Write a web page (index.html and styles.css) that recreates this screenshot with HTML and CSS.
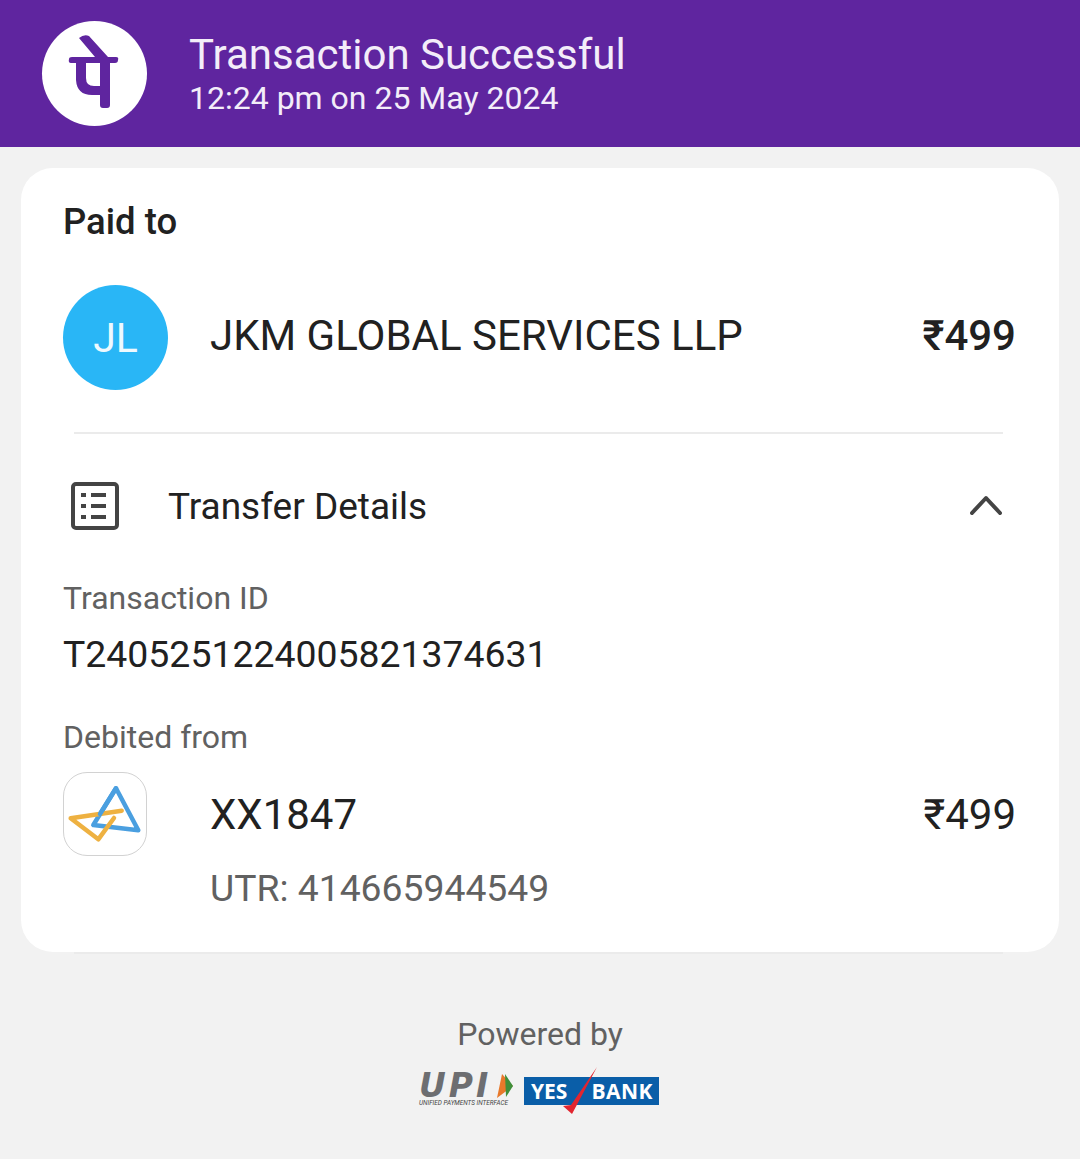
FILE: index.html
```html
<!DOCTYPE html>
<html lang="en">
<head>
    <meta charset="UTF-8">
    <meta name="viewport" content="width=device-width, initial-scale=1.0">
    <title>Transaction Successful</title>
    <link rel="stylesheet" href="styles.css">
</head>
<body>

<header class="top-bar">
    <div class="brand-circle">
        <svg width="105" height="105" viewBox="42 21 105 105">
            <path d="M79 38 Q84 34 89 36 L108 57 L116 57 Q119 57 118 60 Q118 63 115 63 L110 63 L110 105 Q110 108 107 108 L103 108 Q100 108 100 105 L100 95 L92 95 Q77 95 76 80 L76 63 L71 63 Q68 63 69 59 Q69 57 72 57 L95 57 Z M86 63 L86 78 Q86 86 94 86 L100 86 L100 63 Z" fill="#5f259f" fill-rule="evenodd"/>
        </svg>
    </div>
    <div class="top-text">
        <div class="top-title">Transaction Successful</div>
        <div class="top-time">12:24 pm on 25 May 2024</div>
    </div>
</header>

<main class="card">
    <h2 class="paid-label">Paid to</h2>

    <div class="payee-row">
        <div class="avatar">JL</div>
        <div class="payee-name">JKM GLOBAL SERVICES LLP</div>
        <div class="payee-amount">₹499</div>
    </div>

    <hr class="divider">

    <div class="details-row">
        <svg class="details-icon" width="48" height="48" viewBox="0 0 48 48">
            <rect x="2" y="2" width="44" height="44" rx="3" fill="none" stroke="#444" stroke-width="4"/>
            <path d="M10 13h5M10 24h5M10 35h5M20 13h15M20 24h15M20 35h15" stroke="#444" stroke-width="4" fill="none"/>
        </svg>
        <div class="details-title">Transfer Details</div>
        <svg class="chevron" width="32" height="20" viewBox="0 0 32 20">
            <path d="M2 18 L16 3 L30 18" fill="none" stroke="#444" stroke-width="4" stroke-linecap="round" stroke-linejoin="round"/>
        </svg>
    </div>

    <div class="field-label">Transaction ID</div>
    <div class="field-value">T2405251224005821374631</div>

    <div class="field-label debited-label">Debited from</div>
    <div class="bank-row">
        <div class="bank-icon">
            <svg width="84" height="84" viewBox="63 772 84 84">
                <path d="M116 788.3 L93.3 825 L138.3 830.3 Z" fill="none" stroke="#4a9fe0" stroke-width="4.5" stroke-linejoin="round"/>
                <path d="M121.7 810.7 L70.7 818.3 L98.3 839.3 L114 818" fill="none" stroke="#eeb141" stroke-width="4.5" stroke-linejoin="round" stroke-linecap="round"/>
                <path d="M116 788.3 L100 814" fill="none" stroke="#4a9fe0" stroke-width="4.5" stroke-linecap="round"/>
            </svg>
        </div>
        <div class="bank-info">
            <div class="bank-top">
                <div class="bank-account">XX1847</div>
                <div class="bank-amount">₹499</div>
            </div>
            <div class="bank-utr">UTR: 414665944549</div>
        </div>
    </div>
</main>

<hr class="divider card-end">

<footer class="powered">
    <div class="powered-text">Powered by</div>
    <div class="powered-logos">
        <div class="upi-logo">
            <div class="upi-mark">
                <span class="upi-letters">UPI</span>
                <svg width="20" height="26" viewBox="0 0 20 26">
                    <path d="M8 1 L19 13 L3 25 Z" fill="#e8792b"/>
                    <path d="M11 1 L19 13 L12 24 Z" fill="#3f8f3a"/>
                </svg>
            </div>
            <div class="upi-caption">UNIFIED PAYMENTS INTERFACE</div>
        </div>
        <div class="yes-logo">
            <span>YES</span>
            <span class="yes-bank">BANK</span>
            <svg class="yes-tick" width="38" height="50" viewBox="0 0 38 50">
                <path d="M34 0 L9 47 L0 39 L8 38 Z" fill="#e2252f"/>
            </svg>
        </div>
    </div>
</footer>

</body>
</html>
```
FILE: styles.css
```css
* {
    box-sizing: border-box;
}

body {
    margin: 0;
    height: 1159px;
    overflow: hidden;
    background-color: #f2f2f2;
    font-family: Roboto, "Noto Sans", sans-serif;
    color: #212121;
}

.top-bar {
    height: 147px;
    background-color: #5f259f;
    display: flex;
    align-items: center;
    padding-left: 42px;
    gap: 42px;
}

.brand-circle {
    width: 105px;
    height: 105px;
    border-radius: 50%;
    background-color: #fff;
    flex-shrink: 0;
}

.brand-circle svg {
    display: block;
}

.top-text {
    color: #f3edf9;
}

.top-title {
    font-size: 42px;
    line-height: 49px;
}

.top-time {
    font-size: 32px;
    line-height: 38px;
}

.card {
    margin: 21px 21px 0;
    height: 784px;
    background-color: #fff;
    border-radius: 32px;
    padding: 31px 43px 0 42px;
}

.paid-label {
    margin: 0;
    font-size: 36.5px;
    line-height: 46px;
    font-weight: 500;
}

.payee-row {
    display: flex;
    align-items: center;
    margin-top: 40px;
}

.avatar {
    width: 105px;
    height: 105px;
    border-radius: 50%;
    background-color: #29b6f6;
    color: #eef9fe;
    font-size: 41px;
    display: flex;
    align-items: center;
    justify-content: center;
    flex-shrink: 0;
}

.payee-name {
    margin-left: 42px;
    margin-bottom: 4px;
    flex: 1;
    font-size: 42px;
}

.payee-amount {
    margin-bottom: 4px;
    font-size: 42px;
    font-weight: 500;
}

.divider {
    border: none;
    height: 2px;
    background-color: #ebebeb;
    margin: 42px 13px 0 11px;
}

.details-row {
    display: flex;
    align-items: center;
    margin-top: 48px;
    padding-left: 8px;
    padding-right: 14px;
}

.details-title {
    flex: 1;
    margin-left: 49px;
    font-size: 37px;
}

.chevron {
    margin-top: -2px;
}

.field-label {
    margin-top: 48px;
    font-size: 32px;
    line-height: 40px;
    color: #616161;
}

.field-value {
    margin-top: 13px;
    font-size: 37.4px;
    line-height: 46px;
}

.debited-label {
    margin-top: 40px;
}

.bank-row {
    display: flex;
    margin-top: 15px;
}

.bank-icon {
    width: 84px;
    height: 84px;
    border: 1px solid #d2d2d2;
    border-radius: 24px;
    flex-shrink: 0;
}

.bank-icon svg {
    display: block;
    margin: -1px;
}

.bank-info {
    flex: 1;
    margin-left: 63px;
}

.bank-top {
    display: flex;
    justify-content: space-between;
    font-size: 42px;
    line-height: 86px;
}

.bank-utr {
    margin-top: 8px;
    font-size: 37.3px;
    line-height: 44px;
    color: #616161;
}

.card-end {
    margin: 0 77px 0 74px;
}

.powered {
    display: flex;
    flex-direction: column;
    align-items: center;
    margin-top: 60px;
}

.powered-text {
    font-size: 32px;
    line-height: 40px;
    color: #616161;
}

.powered-logos {
    display: flex;
    align-items: flex-start;
    gap: 10px;
    margin-top: 19px;
    margin-left: -2px;
}

.upi-mark {
    display: flex;
    align-items: center;
    height: 26px;
}

.upi-letters {
    font-family: "DejaVu Sans", sans-serif;
    font-size: 33px;
    line-height: 26px;
    font-weight: 700;
    font-style: italic;
    letter-spacing: 3px;
    color: #6d6e71;
    width: 75px;
}

.upi-caption {
    font-size: 6.4px;
    line-height: 9px;
    font-style: italic;
    color: #444;
    white-space: nowrap;
}

.yes-logo {
    position: relative;
    width: 135px;
    height: 28px;
    margin-top: 4px;
    background-color: #0a5ea8;
    color: #fff;
    font-family: "Open Sans", sans-serif;
    font-weight: 700;
    font-size: 21px;
    line-height: 28px;
    display: flex;
    justify-content: space-between;
    padding: 0 6px 0 7px;
}

.yes-bank {
    letter-spacing: 0.5px;
}

.yes-tick {
    position: absolute;
    left: 39px;
    top: -10px;
}
```
